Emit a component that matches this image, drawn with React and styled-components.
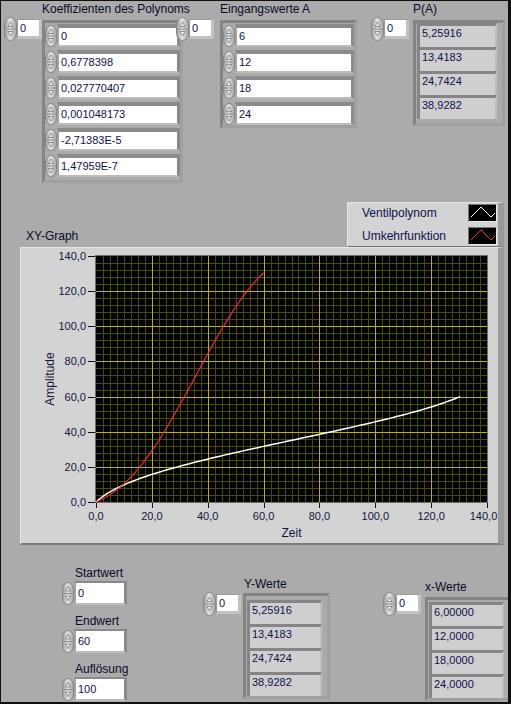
import React, { useId } from 'react';
import styled, { createGlobalStyle } from 'styled-components';

const GlobalStyle = createGlobalStyle`
  *, *::before, *::after { box-sizing: border-box; }
  html, body { margin: 0; padding: 0; background: #ababab; }
  body { font-family: "Liberation Sans", Arial, sans-serif; }
`;

const TEXT = '#10104a';

const Window = styled.div`
  width: 511px;
  height: 704px;
  border-style: solid;
  border-color: #111;
  border-width: 1px 3px 2px 1px;
  background: #ababab;
  overflow: hidden;
  display: flex;
  flex-direction: column;
  font-family: "Liberation Sans", Arial, sans-serif;
  color: #0a0a28;
`;

const TopRow = styled.div`
  display: flex;
  align-items: flex-start;
  padding: 1px 0 0 3px;
`;

const Group = styled.div`
  display: flex;
  align-items: flex-start;
  margin-left: ${p => p.$ml || 0}px;
  margin-top: ${p => p.$mt || 0}px;
`;

const IndexWrap = styled.div`
  display: flex;
  align-items: center;
  margin-top: ${p => p.$mt}px;
  margin-right: ${p => p.$gap}px;
`;

const Stack = styled.div`
  display: flex;
  flex-direction: column;
`;

/* captions may run past their frame (as in the reference), so they take no width */
const Caption = styled.div`
  font-size: 12px;
  line-height: 15px;
  height: 15px;
  width: 0;
  overflow: visible;
  white-space: nowrap;
  padding-left: ${p => p.$indent || 0}px;
`;

const Frame = styled.div`
  margin-top: ${p => p.$mt}px;
  border: 3px solid;
  border-color: #848484 #a0a0a0 #a0a0a0 #848484;
  padding: ${p => p.$pad};
  display: flex;
  flex-direction: column;
  gap: ${p => p.$gap}px;
`;

const ElementRow = styled.div`
  display: flex;
  align-items: center;
`;

const Field = styled.div`
  width: ${p => p.$w + 5}px;
  height: ${p => p.$h + p.$bt + 2}px;
  background: #fff;
  border-style: solid;
  border-width: ${p => p.$bt}px 3px 2px 2px;
  border-color: #8a8a8a #8a8a8a #bcbcbc #a2a2a2;
  padding-left: 2px;
  font-size: 11px;
  line-height: ${p => p.$h}px;
  color: ${TEXT};
  white-space: nowrap;
`;

const IndexBox = styled.div`
  width: 25px;
  height: 20px;
  background: #fff;
  border-style: solid;
  border-width: 1px 3px 3px 1px;
  border-color: #9a9a9a #c2c2c2 #c2c2c2 #9a9a9a;
  padding-left: 2px;
  font-size: 11px;
  line-height: 16px;
  color: ${TEXT};
`;

const Indicator = styled.div`
  width: ${p => p.$w}px;
  height: 24px;
  background: #cfcfcf;
  border-style: solid;
  border-width: 3px 2px 0 3px;
  border-color: #858585 #bdbdbd #bdbdbd #858585;
  padding: 1px 0 0 2px;
  font-size: 11px;
  line-height: 13px;
  color: ${TEXT};
  white-space: nowrap;
`;

const StepperSvg = styled.svg`
  display: block;
  flex: none;
`;

const GraphBlock = styled.div`
  margin: 19px 4px 0 19px;
  display: flex;
  flex-direction: column;
`;

const LegendRow = styled.div`
  display: flex;
  justify-content: space-between;
  align-items: flex-end;
`;

const GraphTitle = styled.div`
  font-size: 12px;
  line-height: 15px;
  margin: 0 0 3px 6px;
`;

const Legend = styled.div`
  width: 157px;
  background: #d3d3d3;
  border-style: solid;
  border-width: 1px 6px 1px 1px;
  border-color: #e6e6e6 #9a9a9a #707070 #e6e6e6;
  padding: 1px 1px 1px 14px;
  display: flex;
  flex-direction: column;
  gap: 5px;
`;

const LegendItem = styled.div`
  display: flex;
  align-items: center;
  justify-content: space-between;
  height: 18px;
  font-size: 12px;
  color: ${TEXT};
`;

const Swatch = styled.div`
  width: 29px;
  height: 18px;
  background: #000;
  border: 1px solid;
  border-color: #767676 #e8e8e8 #e8e8e8 #767676;
  svg { display: block; }
`;

const Panel = styled.div`
  height: 298px;
  background: #d3d3d3;
  border-style: solid;
  border-width: 1px 6px 2px 1px;
  border-color: #e6e6e6 #9a9a9a #7a7a7a #e6e6e6;
`;

const ChartSvg = styled.svg`
  display: block;
  font-family: "Liberation Sans", Arial, sans-serif;
`;

const BottomRow = styled.div`
  display: flex;
  align-items: flex-start;
  padding-left: 61px;
`;

const ControlColumn = styled.div`
  display: flex;
  flex-direction: column;
  gap: 9px;
  margin-top: 21px;
`;

const ControlBlock = styled.div`
  display: flex;
  flex-direction: column;
`;

function Stepper({ w = 12, h = 22 }) {
  const id = 'g' + useId().replace(/[^a-zA-Z0-9]/g, '');
  const mid = h / 2;
  const cx = w / 2;
  return (
    <StepperSvg width={w} height={h} viewBox={`0 0 ${w} ${h}`}>
      <defs>
        <linearGradient id={id} x1="0" y1="0" x2="1" y2="0">
          <stop offset="0" stopColor="#979797" />
          <stop offset="0.45" stopColor="#e4e4e4" />
          <stop offset="1" stopColor="#a2a2a2" />
        </linearGradient>
      </defs>
      <rect x="0.5" y="0.5" width={w - 1} height={h - 1} rx={(w - 1) / 2} ry={(w - 1) / 1.6}
        fill={`url(#${id})`} stroke="#878787" />
      <line x1="1.5" x2={w - 1.5} y1={mid} y2={mid} stroke="#8c8c8c" />
      <path d={`M${cx} ${mid - 7} L${cx + 2.5} ${mid - 2.5} L${cx - 2.5} ${mid - 2.5} Z`}
        fill="#f0f0f0" stroke="#7a7a7a" strokeWidth="0.8" />
      <path d={`M${cx} ${mid + 7} L${cx + 2.5} ${mid + 2.5} L${cx - 2.5} ${mid + 2.5} Z`}
        fill="#f0f0f0" stroke="#7a7a7a" strokeWidth="0.8" />
    </StepperSvg>
  );
}

function IndexControl({ mt, gap }) {
  return (
    <IndexWrap $mt={mt} $gap={gap}>
      <Stepper w={13} h={24} />
      <IndexBox>0</IndexBox>
    </IndexWrap>
  );
}

function ControlArray({ label, values, width, ml, gap, pad }) {
  return (
    <Group $ml={ml}>
      <IndexControl mt={15} gap={gap} />
      <Stack>
        <Caption>{label}</Caption>
        <Frame $mt={3} $pad={pad} $gap={3}>
          {values.map((v, i) => (
            <ElementRow key={i}>
              <Stepper w={12} h={22} />
              <Field $w={width} $h={17} $bt={4}>{v}</Field>
            </ElementRow>
          ))}
        </Frame>
      </Stack>
    </Group>
  );
}

function IndicatorArray({ label, values, width, ml, mt, gap, indexMt, frameMt, pad, indent }) {
  return (
    <Group $ml={ml} $mt={mt}>
      <IndexControl mt={indexMt} gap={gap} />
      <Stack>
        <Caption $indent={indent}>{label}</Caption>
        <Frame $mt={frameMt} $pad={pad} $gap={0}>
          {values.map((v, i) => (
            <Indicator key={i} $w={width}>{v}</Indicator>
          ))}
        </Frame>
      </Stack>
    </Group>
  );
}

function NumControl({ label, value }) {
  return (
    <ControlBlock>
      <Caption $indent={13}>{label}</Caption>
      <ElementRow>
        <Stepper w={12} h={23} />
        <Field $w={48} $h={20} $bt={2}>{value}</Field>
      </ElementRow>
    </ControlBlock>
  );
}

const COEF = [0, 0.6778398, 0.027770407, 0.001048173, -2.71383e-5, 1.47959e-7];
const P = t => COEF.reduce((s, c, i) => s + c * Math.pow(t, i), 0);

function Chart() {
  const W = 477, H = 295;
  const X0 = 75, X1 = 466, Y0 = 8, Y1 = 254;
  const sx = v => X0 + (v / 140) * (X1 - X0);
  const sy = v => Y1 - (v / 140) * (Y1 - Y0);
  const vMinor = [], vMajor = [], hMinor = [], hMajor = [];
  for (let k = 1; k < 56; k++) {
    const x = Math.round(sx(k * 2.5)) + 0.5;
    (k % 8 === 0 ? vMajor : vMinor).push(x);
  }
  for (let k = 1; k < 35; k++) {
    const y = Math.round(sy(k * 4)) + 0.5;
    (k % 5 === 0 ? hMajor : hMinor).push(y);
  }
  const ts = Array.from({ length: 100 }, (_, i) => (i * 60) / 99);
  const red = ts.map(t => `${sx(t).toFixed(2)},${sy(P(t)).toFixed(2)}`).join(' ');
  const white = ts.map(t => `${sx(P(t)).toFixed(2)},${sy(t).toFixed(2)}`).join(' ');
  const ticks = [0, 20, 40, 60, 80, 100, 120, 140];
  const fmt = v => v.toFixed(1).replace('.', ',');
  return (
    <ChartSvg width={W} height={H} viewBox={`0 0 ${W} ${H}`}>
      <rect x={X0} y={Y0} width={X1 - X0} height={Y1 - Y0} fill="#000" />
      <g shapeRendering="crispEdges" strokeWidth="1">
        {vMinor.map(x => <line key={'vm' + x} x1={x} x2={x} y1={Y0} y2={Y1} stroke="#4c4c00" />)}
        {hMinor.map(y => <line key={'hm' + y} x1={X0} x2={X1} y1={y} y2={y} stroke="#4c4c00" />)}
        {vMajor.map(x => <line key={'vM' + x} x1={x} x2={x} y1={Y0} y2={Y1} stroke="#b4b400" />)}
        {hMajor.map(y => <line key={'hM' + y} x1={X0} x2={X1} y1={y} y2={y} stroke="#b4b400" />)}
        <rect x={X0 - 0.5} y={Y0 - 0.5} width={X1 - X0 + 1} height={Y1 - Y0 + 1} fill="none" stroke="#6e6e6e" />
      </g>
      <polyline points={white} fill="none" stroke="#ffffff" strokeWidth="1.5" />
      <polyline points={red} fill="none" stroke="#ff2a2a" strokeWidth="1.1" />
      <g shapeRendering="crispEdges" stroke="#111">
        {ticks.map(v => (
          <line key={'yt' + v} x1={67} x2={X0 - 1} y1={Math.round(sy(v)) + 0.5} y2={Math.round(sy(v)) + 0.5} />
        ))}
        {ticks.map(v => (
          <line key={'xt' + v} x1={Math.round(sx(v)) + 0.5} x2={Math.round(sx(v)) + 0.5} y1={Y1 + 1} y2={Y1 + 6} />
        ))}
      </g>
      <g fontSize="11" fill="#14143c">
        {ticks.map(v => (
          <text key={'yl' + v} x={65} y={sy(v) + 4} textAnchor="end">{fmt(v)}</text>
        ))}
        {ticks.map(v => (
          <text key={'xl' + v} x={Math.min(sx(v), W - 14.5)} y={272} textAnchor="middle">{fmt(v)}</text>
        ))}
      </g>
      <text x={(X0 + X1) / 2} y={289} textAnchor="middle" fontSize="12" fill="#14143c">Zeit</text>
      <text transform={`translate(33 ${(Y0 + Y1) / 2}) rotate(-90)`} textAnchor="middle" fontSize="12" fill="#14143c">Amplitude</text>
    </ChartSvg>
  );
}

function Zigzag({ color }) {
  return (
    <svg width="27" height="16" viewBox="0 0 27 16">
      <polyline points="2,12 12,2 22,12 26,8" fill="none" stroke={color} strokeWidth="1" />
    </svg>
  );
}

export default function App() {
  return (
    <>
      <GlobalStyle />
      <Window>
        <TopRow>
          <ControlArray
            label="Koeffizienten des Polynoms"
            values={['0', '0,6778398', '0,027770407', '0,001048173', '-2,71383E-5', '1,47959E-7']}
            width={118}
            ml={0}
            gap={0}
            pad="1px 0 3px 0"
          />
          <ControlArray
            label="Eingangswerte A"
            values={['6', '12', '18', '24']}
            width={114}
            ml={-7}
            gap={6}
            pad="1px 0 0 0"
          />
          <IndicatorArray
            label="P(A)"
            values={['5,25916', '13,4183', '24,7424', '38,9282']}
            width={80}
            ml={14}
            gap={4}
            indexMt={15}
            frameMt={3}
            pad="0 5px 4px 1px"
            indent={0}
          />
        </TopRow>

        <GraphBlock>
          <LegendRow>
            <GraphTitle>XY-Graph</GraphTitle>
            <Legend>
              <LegendItem>
                <span>Ventilpolynom</span>
                <Swatch><Zigzag color="#ffffff" /></Swatch>
              </LegendItem>
              <LegendItem>
                <span>Umkehrfunktion</span>
                <Swatch><Zigzag color="#ff2a2a" /></Swatch>
              </LegendItem>
            </Legend>
          </LegendRow>
          <Panel>
            <Chart />
          </Panel>
        </GraphBlock>

        <BottomRow>
          <ControlColumn>
            <NumControl label="Startwert" value="0" />
            <NumControl label="Endwert" value="60" />
            <NumControl label="Auflösung" value="100" />
          </ControlColumn>
          <IndicatorArray
            label="Y-Werte"
            values={['5,25916', '13,4183', '24,7424', '38,9282']}
            width={75}
            ml={76}
            mt={32}
            gap={2}
            indexMt={15}
            frameMt={1}
            pad="4px 5px 0 1px"
            indent={1}
          />
          <IndicatorArray
            label="x-Werte"
            values={['6,00000', '12,0000', '18,0000', '24,0000']}
            width={75}
            ml={53}
            mt={35}
            gap={4}
            indexMt={12}
            frameMt={2}
            pad="2px 5px 0 1px"
            indent={0}
          />
        </BottomRow>
      </Window>
    </>
  );
}
